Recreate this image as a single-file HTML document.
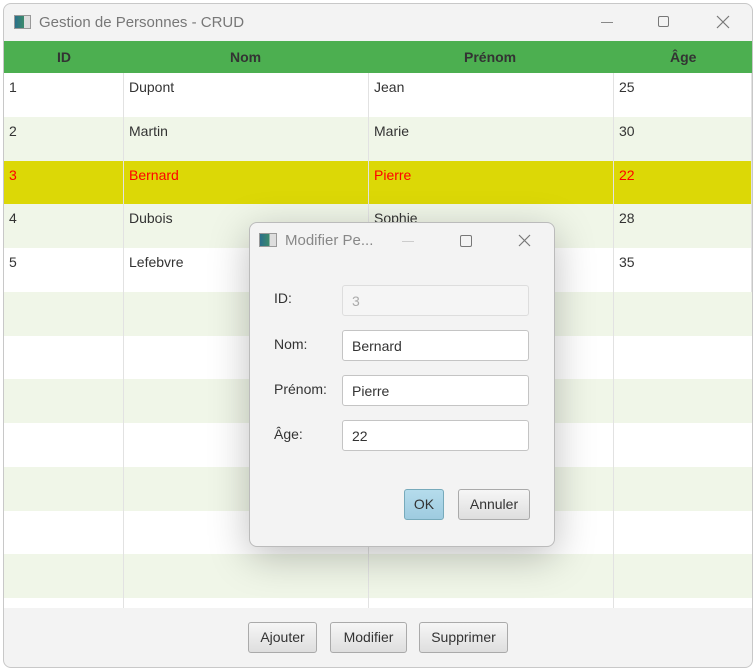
<!DOCTYPE html>
<html><head><meta charset="utf-8"><style>
*{box-sizing:border-box;margin:0;padding:0}
body{width:755px;height:670px;background:#fff;font-family:"Liberation Sans",sans-serif;font-size:14px;color:#333;position:relative;overflow:hidden}
.win{position:absolute;left:3px;top:3px;width:750px;height:665px;border:1px solid #c8c8c8;border-radius:8px;background:#f3f3f3;overflow:hidden}
.abs{position:absolute}
.row{position:absolute;left:0;width:748px;height:44px}
.cell{position:absolute;top:0;height:100%;padding:6px 0 0 5px;border-right:1px solid #e2e2e2}
.btn{position:absolute;height:31px;border:1px solid #aaa;border-radius:3px;background:linear-gradient(#f6f6f6,#dedede);font-size:14px;text-align:center;line-height:29px;color:#333}
.fld{position:absolute;left:92px;width:187px;height:31px;border:1px solid #c4c4c4;border-radius:3px;background:#fff;padding:7px 0 0 9px;font-size:14px}
.lbl{position:absolute;left:24px;font-size:14px}
</style></head><body>
<div class="win">
 <div class="abs" style="left:10px;top:11px;width:17px;height:14px;border:1px solid #999;background:linear-gradient(90deg,#2a6f8a 0,#3b8a6a 60%,#ddd 60%)"></div>
 <div class="abs" style="left:35px;top:10px;font-size:15px;color:#777">Gestion de Personnes - CRUD</div>
 <div class="abs" style="left:597px;top:18px;width:12px;height:1px;background:#888"></div>
 <div class="abs" style="left:654px;top:12px;width:11px;height:11px;border:1px solid #777;border-radius:2px"></div>
 <svg class="abs" style="left:712px;top:11px" width="14" height="14"><path d="M1 1L13 13M13 1L1 13" stroke="#777" stroke-width="1.2"/></svg>
 <div class="abs" style="left:0;top:37px;width:748px;height:32px;background:#4caf50;font-weight:bold;font-size:14px;color:#333">
  <span class="abs" style="left:53px;top:8px">ID</span>
  <span class="abs" style="left:226px;top:8px">Nom</span>
  <span class="abs" style="left:460px;top:8px">Prénom</span>
  <span class="abs" style="left:666px;top:8px">Âge</span>
 </div>
 <div class="abs" style="left:0;top:69px;width:748px;height:535px;background:#fff;overflow:hidden" id="t">
  <div class="row" style="top:0;background:#fff"><div class="cell" style="left:0;width:120px">1</div><div class="cell" style="left:120px;width:245px">Dupont</div><div class="cell" style="left:365px;width:245px">Jean</div><div class="cell" style="left:610px;width:138px">25</div></div>
  <div class="row" style="top:44px;background:#f0f6e8"><div class="cell" style="left:0;width:120px">2</div><div class="cell" style="left:120px;width:245px">Martin</div><div class="cell" style="left:365px;width:245px">Marie</div><div class="cell" style="left:610px;width:138px">30</div></div>
  <div class="row" style="top:88px;height:43px;background:#dcd806;color:#f00"><div class="cell" style="left:0;width:120px">3</div><div class="cell" style="left:120px;width:245px">Bernard</div><div class="cell" style="left:365px;width:245px">Pierre</div><div class="cell" style="left:610px;width:138px">22</div></div>
  <div class="row" style="top:131px;background:#f0f6e8"><div class="cell" style="left:0;width:120px">4</div><div class="cell" style="left:120px;width:245px">Dubois</div><div class="cell" style="left:365px;width:245px">Sophie</div><div class="cell" style="left:610px;width:138px">28</div></div>
  <div class="row" style="top:175px;background:#fff"><div class="cell" style="left:0;width:120px">5</div><div class="cell" style="left:120px;width:245px">Lefebvre</div><div class="cell" style="left:365px;width:245px"></div><div class="cell" style="left:610px;width:138px">35</div></div>
  <div class="row" style="top:219px;background:#f0f6e8"><div class="cell" style="left:0;width:120px"></div><div class="cell" style="left:120px;width:245px"></div><div class="cell" style="left:365px;width:245px"></div></div>
  <div class="row" style="top:263px;background:#fff"><div class="cell" style="left:0;width:120px"></div><div class="cell" style="left:120px;width:245px"></div><div class="cell" style="left:365px;width:245px"></div></div>
  <div class="row" style="top:306px;background:#f0f6e8"><div class="cell" style="left:0;width:120px"></div><div class="cell" style="left:120px;width:245px"></div><div class="cell" style="left:365px;width:245px"></div></div>
  <div class="row" style="top:350px;background:#fff"><div class="cell" style="left:0;width:120px"></div><div class="cell" style="left:120px;width:245px"></div><div class="cell" style="left:365px;width:245px"></div></div>
  <div class="row" style="top:394px;background:#f0f6e8"><div class="cell" style="left:0;width:120px"></div><div class="cell" style="left:120px;width:245px"></div><div class="cell" style="left:365px;width:245px"></div></div>
  <div class="row" style="top:438px;background:#fff"><div class="cell" style="left:0;width:120px"></div><div class="cell" style="left:120px;width:245px"></div><div class="cell" style="left:365px;width:245px"></div></div>
  <div class="row" style="top:481px;background:#f0f6e8"><div class="cell" style="left:0;width:120px"></div><div class="cell" style="left:120px;width:245px"></div><div class="cell" style="left:365px;width:245px"></div></div>
  <div class="row" style="top:525px;background:#fff"><div class="cell" style="left:0;width:120px"></div><div class="cell" style="left:120px;width:245px"></div><div class="cell" style="left:365px;width:245px"></div></div>
 </div>
 <div class="btn" style="left:244px;top:618px;width:69px">Ajouter</div>
 <div class="btn" style="left:326px;top:618px;width:77px">Modifier</div>
 <div class="btn" style="left:415px;top:618px;width:89px">Supprimer</div>
</div>
<div class="abs" style="left:249px;top:222px;width:306px;height:325px;border:1px solid #bbb;border-radius:8px;background:#f3f3f3;box-shadow:0 10px 40px rgba(0,0,0,.25)">
 <div class="abs" style="left:9px;top:10px;width:18px;height:14px;border:1px solid #999;background:linear-gradient(90deg,#2a6f8a 0,#3b8a6a 60%,#ddd 60%)"></div>
 <div class="abs" style="left:35px;top:9px;font-size:15px;color:#888">Modifier Pe...</div>
 <div class="abs" style="left:152px;top:18px;width:12px;height:1px;background:#ccc"></div>
 <div class="abs" style="left:210px;top:12px;width:12px;height:12px;border:1px solid #777;border-radius:2px"></div>
 <svg class="abs" style="left:268px;top:11px" width="13" height="13"><path d="M1 1L12 12M12 1L1 12" stroke="#777" stroke-width="1.2"/></svg>
 <div class="lbl" style="top:67px">ID:</div>
 <div class="fld" style="top:62px;background:#f5f5f5;border-color:#ddd;color:#aaa">3</div>
 <div class="lbl" style="top:113px">Nom:</div>
 <div class="fld" style="top:107px">Bernard</div>
 <div class="lbl" style="top:158px">Prénom:</div>
 <div class="fld" style="top:152px">Pierre</div>
 <div class="lbl" style="top:203px">Âge:</div>
 <div class="fld" style="top:197px">22</div>
 <div class="btn" style="left:154px;top:266px;width:40px;background:linear-gradient(#b5dcec,#9ecbe0);border-color:#7ab">OK</div>
 <div class="btn" style="left:208px;top:266px;width:72px">Annuler</div>
</div>
</body></html>
